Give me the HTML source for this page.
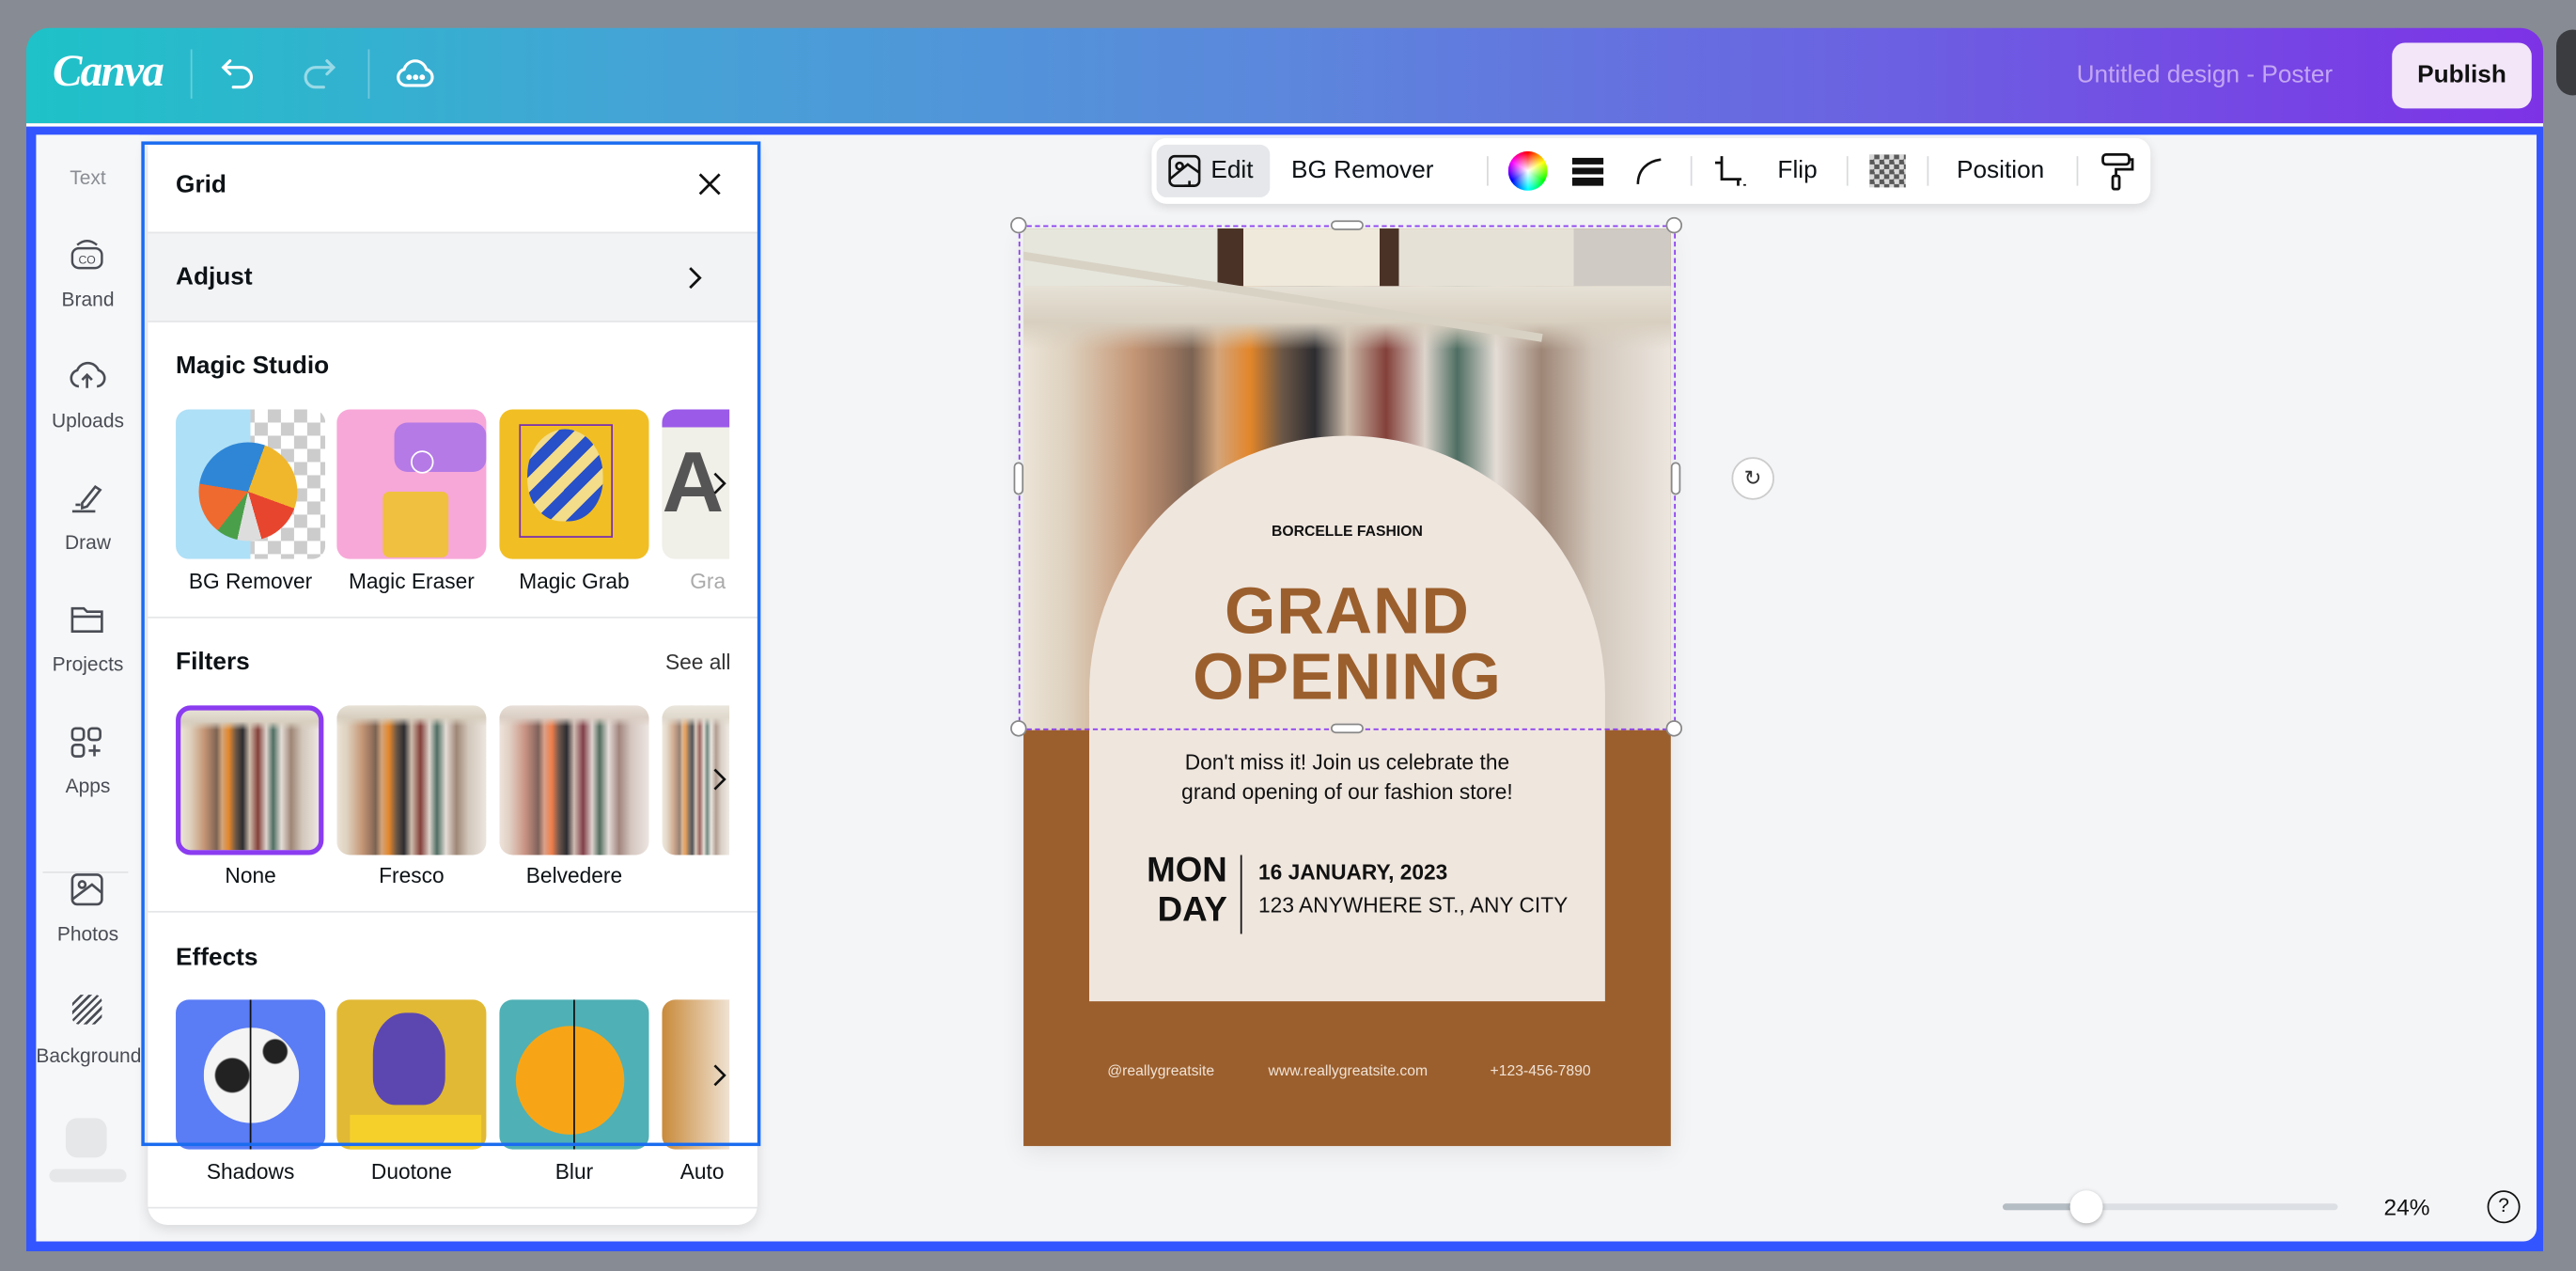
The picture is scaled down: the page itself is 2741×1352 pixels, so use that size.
<!DOCTYPE html>
<html><head><meta charset="utf-8">
<style>
*{box-sizing:border-box;margin:0;padding:0}
html,body{width:2741px;height:1352px;overflow:hidden;background:#878b93;font-family:"Liberation Sans",sans-serif}
#s{position:absolute;left:0;top:0;width:1568px;height:773px;transform:scale(1.74809,1.74903);transform-origin:0 0}
.a{position:absolute}
.hdr{left:16px;top:17px;width:1532px;height:58px;border-radius:14px 14px 0 0;background:linear-gradient(90deg,#1ec2c8 0%,#45a3d6 25%,#5c87dc 50%,#6c5fe2 75%,#7d32e6 100%)}
.frame{left:16px;top:77px;width:1532px;height:684px;background:#3355ff}
.inner{left:22px;top:82px;width:1522px;height:673px;background:#f4f5f7;border-radius:0 0 8px 8px}
.side{left:22px;top:82px;width:63px;height:673px;background:#f6f7f8}
.sl{width:63px;text-align:center;font-size:12px;color:#4a4d55}
.panel{left:90px;top:87px;width:371px;height:658px;background:#fff;border-radius:0 0 12px 12px;box-shadow:0 2px 8px rgba(0,0,0,.12)}
.h{font-weight:bold;font-size:15px;color:#0d1216}
.th{width:91px;height:91px;border-radius:8px;overflow:hidden}
.lb{width:99px;text-align:center;font-size:13px;color:#0d1216}
.dv{left:90px;width:371px;height:1px;background:#e5e6e8}
.tb{left:701px;top:84px;width:608px;height:40px;background:#fff;border-radius:9px;box-shadow:0 2px 6px rgba(0,0,0,.12)}
.tt{font-size:15px;color:#0d1216;top:95px}
.sep{width:1px;height:18px;background:#d9dadd;top:95px}
.hd{width:10px;height:10px;border-radius:50%;background:#fff;border:1px solid #888}
.clothes{background:
linear-gradient(180deg,#e6e1d6 0,#d8cfc0 8%,rgba(0,0,0,0) 14%),
linear-gradient(90deg,#ece4d8 0%,#ddd0bd 7%,#d2b49a 12%,#c49676 17%,#a07a62 22%,#7b6353 26%,#d3a47a 30%,#e2862a 35%,#6a5646 40%,#2c2c30 45%,#cdbcab 50%,#83403a 56%,#ddd4cc 62%,#4f6e63 67%,#e4ddd6 73%,#9e8676 80%,#d2c7bb 88%,#ece6df 100%)}
</style></head><body>
<div id="s">
<div class="a" style="left:1556px;top:18px;width:20px;height:40px;border-radius:20px;background:#3a3c40"></div>
<div class="a hdr"></div>
<div class="a" style="left:32px;top:28px;font-family:'Liberation Serif',serif;font-style:italic;font-weight:bold;font-size:27px;color:#fff;letter-spacing:-1px">Canva</div>
<div class="a" style="left:116px;top:30px;width:1px;height:30px;background:rgba(255,255,255,.3)"></div>
<div class="a" style="left:224px;top:30px;width:1px;height:30px;background:rgba(255,255,255,.3)"></div>
<svg class="a" style="left:134px;top:35px" width="22" height="20" viewBox="0 0 22 20" fill="none" stroke="#fff" stroke-width="1.8" stroke-linecap="round"><path d="M6 2 L2 6 L6 10 M2 6 H13 a6 6 0 0 1 0 12 H8"/></svg>
<svg class="a" style="left:183px;top:35px" width="22" height="20" viewBox="0 0 22 20" fill="none" stroke="rgba(255,255,255,.5)" stroke-width="1.8" stroke-linecap="round"><path d="M16 2 L20 6 L16 10 M20 6 H9 a6 6 0 0 0 0 12 H14"/></svg>
<svg class="a" style="left:240px;top:33px" width="26" height="24" viewBox="0 0 26 24" fill="none" stroke="#fff" stroke-width="1.8"><path d="M7 19 a5 5 0 0 1 -1 -9.8 a7 7 0 0 1 13.5 0 a5 5 0 0 1 -1 9.8 Z"/><circle cx="9" cy="14" r=".8" fill="#fff"/><circle cx="13" cy="14" r=".8" fill="#fff"/><circle cx="17" cy="14" r=".8" fill="#fff"/></svg>
<div class="a" style="left:1264px;top:37px;font-size:15px;color:#c3a6f2">Untitled design - Poster</div>
<div class="a" style="left:1456px;top:26px;width:85px;height:40px;border-radius:8px;background:#f2e6f8;font-size:15px;font-weight:bold;color:#111;text-align:center;line-height:40px">Publish</div>

<div class="a" style="left:16px;top:75px;width:1532px;height:2px;background:#fff"></div>
<div class="a frame"></div>
<div class="a inner"></div>
<div class="a side"></div>
<div class="a" style="left:26px;top:530px;width:52px;height:1px;background:#e2e3e5"></div>
<div class="a sl" style="left:22px;top:101px;color:#8a8d94">Text</div>
<svg class="a" style="left:42px;top:143px" width="22" height="22" viewBox="0 0 22 22" fill="none" stroke="#4a4d55" stroke-width="1.4"><rect x="2" y="8" width="18" height="12" rx="4"/><path d="M5 6 Q11 1 17 6"/><text x="11" y="17.5" font-size="7" text-anchor="middle" fill="#4a4d55" stroke="none" font-family="Liberation Sans">CO</text></svg>
<div class="a sl" style="left:22px;top:175px">Brand</div>
<svg class="a" style="left:41px;top:218px" width="24" height="20" viewBox="0 0 24 20" fill="none" stroke="#4a4d55" stroke-width="1.5"><path d="M7 17 a5 5 0 0 1 -1 -9.8 a7 7 0 0 1 13 0 a5 5 0 0 1 -1 9.8 M12 18 V10 M9 13 L12 10 L15 13"/></svg>
<div class="a sl" style="left:22px;top:249px">Uploads</div>
<svg class="a" style="left:42px;top:292px" width="22" height="22" viewBox="0 0 22 22" fill="none" stroke="#4a4d55" stroke-width="1.5"><path d="M8 14 L16 4 L19 6 L11 16 L8 17 Z M2 19 H16 M4 15 H7"/></svg>
<div class="a sl" style="left:22px;top:323px">Draw</div>
<svg class="a" style="left:42px;top:366px" width="22" height="20" viewBox="0 0 22 20" fill="none" stroke="#4a4d55" stroke-width="1.5"><path d="M2 4 H9 L11 6 H20 V18 H2 Z M2 9 H20"/></svg>
<div class="a sl" style="left:22px;top:397px">Projects</div>
<svg class="a" style="left:42px;top:441px" width="22" height="22" viewBox="0 0 22 22" fill="none" stroke="#4a4d55" stroke-width="1.5"><rect x="2" y="2" width="7" height="7" rx="2"/><rect x="12" y="2" width="7" height="7" rx="2"/><rect x="2" y="12" width="7" height="7" rx="2"/><path d="M15.5 12 V19 M12 15.5 H19"/></svg>
<div class="a sl" style="left:22px;top:471px">Apps</div>
<svg class="a" style="left:42px;top:530px" width="22" height="22" viewBox="0 0 22 22" fill="none" stroke="#4a4d55" stroke-width="1.5"><rect x="2" y="2" width="18" height="18" rx="3"/><circle cx="8" cy="8" r="2"/><path d="M2 17 L14 8 L20 13"/></svg>
<div class="a sl" style="left:22px;top:561px">Photos</div>
<div class="a" style="left:44px;top:605px;width:18px;height:18px;border-radius:4px;background:repeating-linear-gradient(135deg,#4a4d55 0 1.5px,transparent 1.5px 3.5px)"></div>
<div class="a sl" style="left:18px;top:635px;width:72px">Background</div>
<div class="a" style="left:40px;top:680px;width:25px;height:24px;border-radius:7px;background:#e6e7e9"></div>
<div class="a" style="left:30px;top:711px;width:47px;height:8px;border-radius:4px;background:#e6e7e9"></div>

<div class="a panel"></div>
<div class="a h" style="left:107px;top:104px">Grid</div>
<svg class="a" style="left:424px;top:104px" width="16" height="16" viewBox="0 0 16 16" stroke="#111" stroke-width="1.6"><path d="M2 2 L14 14 M14 2 L2 14"/></svg>
<div class="a" style="left:90px;top:141px;width:371px;height:55px;background:#f2f3f5;border-top:1px solid #e5e6e8;border-bottom:1px solid #e5e6e8"></div>
<div class="a h" style="left:107px;top:160px">Adjust</div>
<svg class="a" style="left:418px;top:161px" width="10" height="16" viewBox="0 0 10 16" fill="none" stroke="#111" stroke-width="1.6"><path d="M2 2 L8 8 L2 14"/></svg>
<div class="a h" style="left:107px;top:214px">Magic Studio</div>
<div class="a th" style="left:107px;top:249px;background:linear-gradient(90deg,#aee0f7 50%,transparent 50%),repeating-conic-gradient(#ccc 0 25%,#fff 0 50%) 0 0/16px 16px"><div class="a" style="left:14px;top:20px;width:60px;height:60px;border-radius:50%;background:conic-gradient(from 20deg,#f0b72c 0 25%,#e8452e 0 40%,#ddd 0 48%,#4aa04a 0 55%,#ef6a2f 0 72%,#2f86d6 0 100%)"></div></div>
<div class="a th" style="left:205px;top:249px;background:#f7a8d8"><div class="a" style="left:35px;top:8px;width:56px;height:30px;border-radius:8px;background:#b57ae6"></div><div class="a" style="left:28px;top:50px;width:40px;height:40px;background:#f0c040;border-radius:4px"></div><div class="a" style="left:45px;top:25px;width:14px;height:14px;border:1.5px solid #fff;border-radius:50%"></div></div>
<div class="a th" style="left:304px;top:249px;background:#f1bf24"><div class="a" style="left:12px;top:9px;width:57px;height:69px;border:1.5px solid #7a2fb0"></div><div class="a" style="left:17px;top:12px;width:46px;height:56px;border-radius:50% 50% 45% 45%;background:repeating-linear-gradient(135deg,#2850c8 0 7px,#f3dc8a 7px 14px)"></div></div>
<div class="a" style="left:403px;top:249px;width:41px;height:91px;border-radius:8px 0 0 8px;background:linear-gradient(180deg,#9b5ae8 0 12%,#f0efe8 12%);overflow:hidden;font-size:52px;font-weight:bold;color:#555;line-height:91px">A</div>
<div class="a lb" style="left:103px;top:346px">BG Remover</div>
<div class="a lb" style="left:201px;top:346px">Magic Eraser</div>
<div class="a lb" style="left:300px;top:346px">Magic Grab</div>
<div class="a lb" style="left:400px;top:346px;width:44px;overflow:hidden;color:#aaa;text-align:left;padding-left:20px">Gra</div>
<div class="a dv" style="top:375px"></div>
<div class="a h" style="left:107px;top:394px">Filters</div>
<div class="a" style="left:405px;top:395px;font-size:13px;color:#333">See all</div>
<div class="a th clothes" style="left:107px;top:429px;border:3px solid #8b3cf0;border-radius:9px;width:90px"></div>
<div class="a th clothes" style="left:205px;top:429px"></div>
<div class="a th clothes" style="left:304px;top:429px;filter:hue-rotate(-15deg) saturate(.9)"></div>
<div class="a th clothes" style="left:403px;top:429px;width:41px;border-radius:8px 0 0 8px;opacity:.8"></div>
<div class="a lb" style="left:103px;top:525px">None</div>
<div class="a lb" style="left:201px;top:525px">Fresco</div>
<div class="a lb" style="left:300px;top:525px">Belvedere</div>
<div class="a h" style="left:107px;top:574px">Effects</div>
<div class="a dv" style="top:554px"></div>
<div class="a th" style="left:107px;top:608px;background:#5a7cf5"><div class="a" style="left:17px;top:17px;width:58px;height:58px;border-radius:50%;background:radial-gradient(circle at 30% 50%,#222 0 10px,transparent 11px),radial-gradient(circle at 75% 25%,#222 0 7px,transparent 8px),#f4f4f4"></div><div class="a" style="left:45px;top:0;width:1px;height:91px;background:#111"></div></div>
<div class="a th" style="left:205px;top:608px;background:#e1b935"><div class="a" style="left:22px;top:8px;width:44px;height:56px;border-radius:45% 45% 30% 30%;background:#5c47b0"></div><div class="a" style="left:8px;top:70px;width:80px;height:25px;background:#f5d02a"></div></div>
<div class="a th" style="left:304px;top:608px;background:#4fb0b5"><div class="a" style="left:10px;top:16px;width:66px;height:66px;border-radius:50%;background:#f7a517"></div><div class="a" style="left:45px;top:0;width:1px;height:91px;background:#111"></div></div>
<div class="a th" style="left:403px;top:608px;width:41px;border-radius:8px 0 0 8px;background:linear-gradient(90deg,#c98a3a,#efe2d2)"></div>
<svg class="a" style="left:434px;top:287px" width="8" height="14" viewBox="0 0 8 14" fill="none" stroke="#111" stroke-width="1.5"><path d="M1 1 L7 7 L1 13"/></svg>
<svg class="a" style="left:434px;top:467px" width="8" height="14" viewBox="0 0 8 14" fill="none" stroke="#111" stroke-width="1.5"><path d="M1 1 L7 7 L1 13"/></svg>
<svg class="a" style="left:434px;top:647px" width="8" height="14" viewBox="0 0 8 14" fill="none" stroke="#111" stroke-width="1.5"><path d="M1 1 L7 7 L1 13"/></svg>
<div class="a lb" style="left:103px;top:705px">Shadows</div>
<div class="a lb" style="left:201px;top:705px">Duotone</div>
<div class="a lb" style="left:300px;top:705px">Blur</div>
<div class="a lb" style="left:400px;top:705px;width:44px;overflow:hidden;text-align:left;padding-left:14px">Auto</div>
<div class="a dv" style="top:734px"></div>
<div class="a" style="left:86px;top:86px;width:377px;height:611px;border:2px solid #1a6cf0"></div>

<!-- toolbar -->
<div class="a tb"></div>
<div class="a" style="left:704px;top:88px;width:69px;height:32px;border-radius:6px;background:#e5e7ea"></div>
<svg class="a" style="left:710px;top:93px" width="22" height="22" viewBox="0 0 22 22" fill="none" stroke="#111" stroke-width="1.5"><rect x="2" y="2" width="18" height="18" rx="3"/><circle cx="8" cy="8" r="2"/><path d="M2 16 L13 7 L20 12 M11 20 H17 M14 17 V20"/></svg>
<div class="a tt" style="left:737px">Edit</div>
<div class="a tt" style="left:786px">BG Remover</div>
<div class="a sep" style="left:905px"></div>
<div class="a" style="left:918px;top:92px;width:24px;height:24px;border-radius:50%;background:radial-gradient(circle,#fff 0,rgba(255,255,255,0) 65%),conic-gradient(red,yellow,lime,cyan,blue,magenta,red)"></div>
<div class="a" style="left:957px;top:96px;width:19px;height:4px;background:#111"></div>
<div class="a" style="left:957px;top:102px;width:19px;height:4px;background:#111"></div>
<div class="a" style="left:957px;top:108px;width:19px;height:5px;background:#111"></div>
<svg class="a" style="left:995px;top:95px" width="20" height="18" viewBox="0 0 20 18" fill="none" stroke="#111" stroke-width="1.5"><path d="M2 17 C2 8 8 3 16 2"/></svg>
<div class="a sep" style="left:1029px"></div>
<svg class="a" style="left:1042px;top:93px" width="22" height="22" viewBox="0 0 22 22" fill="none" stroke="#111" stroke-width="1.6"><path d="M6 2 V16 H18 M2 6 H6 M16 16 V20 M20 20 V19"/></svg>
<div class="a tt" style="left:1082px">Flip</div>
<div class="a sep" style="left:1124px"></div>
<div class="a" style="left:1138px;top:94px;width:22px;height:20px;background:repeating-conic-gradient(#222 0 25%,#ccc 0 50%) 0 0/6px 6px;opacity:.75"></div>
<div class="a sep" style="left:1173px"></div>
<div class="a tt" style="left:1191px">Position</div>
<div class="a sep" style="left:1264px"></div>
<svg class="a" style="left:1278px;top:92px" width="22" height="24" viewBox="0 0 22 24" fill="none" stroke="#111" stroke-width="1.6"><rect x="2" y="2" width="16" height="6" rx="2"/><path d="M18 5 H20 V11 H10 V15"/><rect x="8" y="15" width="4" height="8" rx="1"/></svg>

<!-- poster -->
<div class="a" style="left:623px;top:139px;width:394px;height:558px;background:#9b5f2d;box-shadow:0 4px 14px rgba(0,0,0,.08)"></div>
<div class="a" style="left:623px;top:139px;width:394px;height:305px;overflow:hidden;background:linear-gradient(90deg,#e6e6dc 0 30%,#4a3226 30% 34%,#efe9db 34% 55%,#4a3226 55% 58%,#e6e1d6 58% 85%,#cfcac3 85%)">
  <div class="a clothes" style="left:0;top:35px;width:394px;height:275px"></div>
  <div class="a" style="left:0;top:14px;width:320px;height:5px;background:#d8d2c5;transform:rotate(9deg);transform-origin:0 0"></div>
</div>
<div class="a" style="left:663px;top:265px;width:314px;height:344px;background:#efe6de;border-radius:157px 157px 0 0"></div>
<div class="a" style="left:663px;top:318px;width:314px;text-align:center;font-size:9px;font-weight:bold;color:#111">BORCELLE FASHION</div>
<div class="a" style="left:663px;top:352px;width:314px;text-align:center;font-size:40px;font-weight:900;color:#9b5f2d;line-height:40px;letter-spacing:0.5px">GRAND<br>OPENING</div>
<div class="a" style="left:663px;top:455px;width:314px;text-align:center;font-size:13px;color:#111;line-height:18px">Don't miss it! Join us celebrate the<br>grand opening of our fashion store!</div>
<div class="a" style="left:670px;top:518px;width:77px;text-align:right;font-size:21px;font-weight:900;color:#111;line-height:24px">MON<br>DAY</div>
<div class="a" style="left:755px;top:520px;width:1px;height:48px;background:#111"></div>
<div class="a" style="left:766px;top:523px;font-size:13px;font-weight:bold;color:#111">16 JANUARY, 2023</div>
<div class="a" style="left:766px;top:543px;font-size:13px;color:#111">123 ANYWHERE ST., ANY CITY</div>
<div class="a" style="left:674px;top:646px;font-size:9px;color:#f0e2d5">@reallygreatsite</div>
<div class="a" style="left:772px;top:646px;font-size:9px;color:#f0e2d5">www.reallygreatsite.com</div>
<div class="a" style="left:907px;top:646px;font-size:9px;color:#f0e2d5">+123-456-7890</div>
<!-- selection -->
<div class="a" style="left:620px;top:137px;width:400px;height:307px;border:1.5px dashed #8b3cf0"></div>
<div class="a hd" style="left:615px;top:132px"></div>
<div class="a hd" style="left:1014px;top:132px"></div>
<div class="a hd" style="left:615px;top:438px"></div>
<div class="a hd" style="left:1014px;top:438px"></div>
<div class="a" style="left:810px;top:134px;width:20px;height:6px;border-radius:3px;background:#fff;border:1px solid #888"></div>
<div class="a" style="left:810px;top:440px;width:20px;height:6px;border-radius:3px;background:#fff;border:1px solid #888"></div>
<div class="a" style="left:617px;top:281px;width:6px;height:20px;border-radius:3px;background:#fff;border:1px solid #888"></div>
<div class="a" style="left:1017px;top:281px;width:6px;height:20px;border-radius:3px;background:#fff;border:1px solid #888"></div>
<div class="a" style="left:1054px;top:278px;width:26px;height:26px;border-radius:50%;background:#fff;border:1px solid #ccc;text-align:center;line-height:24px;font-size:13px;color:#333">&#8635;</div>

<!-- zoom -->
<div class="a" style="left:1219px;top:732px;width:204px;height:4px;border-radius:2px;background:#dcdfe3"></div>
<div class="a" style="left:1219px;top:732px;width:51px;height:4px;border-radius:2px;background:#b5bdc4"></div>
<div class="a" style="left:1260px;top:724px;width:20px;height:20px;border-radius:50%;background:#fff;box-shadow:0 1px 3px rgba(0,0,0,.3)"></div>
<div class="a" style="left:1451px;top:726px;font-size:14px;color:#111">24%</div>
<div class="a" style="left:1514px;top:724px;width:20px;height:20px;border-radius:50%;border:1.5px solid #111;text-align:center;line-height:17px;font-size:12px;color:#111">?</div>
</div>
</body></html>
